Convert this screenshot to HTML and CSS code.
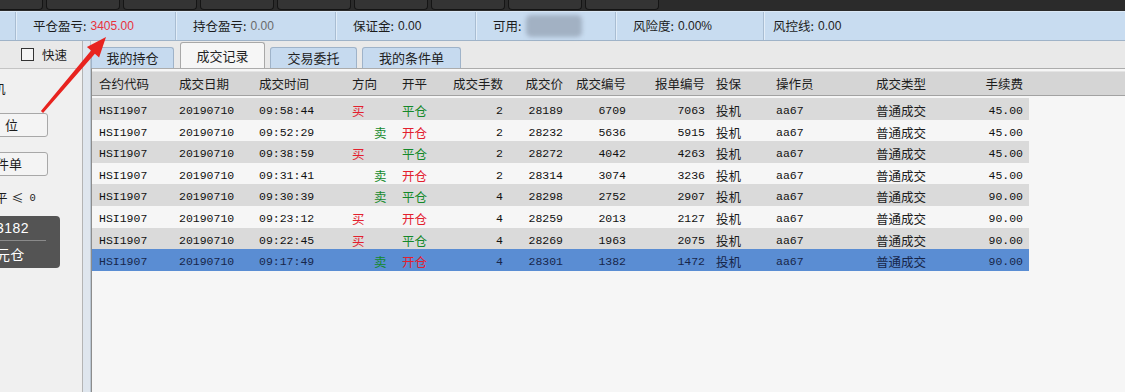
FILE: index.html
```html
<!DOCTYPE html>
<html lang="zh-CN">
<head>
    <meta charset="UTF-8">
    <meta name="viewport" content="width=device-width, initial-scale=1.0">
    <title>成交记录</title>
    <link rel="stylesheet" href="styles.css">
</head>
<body>
    <div class="top-bar">
        <div class="top-btn"></div>
        <div class="top-btn"></div>
        <div class="top-btn"></div>
        <div class="top-btn"></div>
        <div class="top-btn"></div>
        <div class="top-btn"></div>
        <div class="top-btn"></div>
        <div class="top-btn"></div>
        <div class="top-btn"></div>
    </div>

    <div class="account-bar">
        <div class="acc-lead"></div>
        <div class="acc-item w160">平仓盈亏: <span class="acc-loss">3405.00</span></div>
        <div class="acc-item w160">持仓盈亏: <span class="acc-dim">0.00</span></div>
        <div class="acc-item w140">保证金: <span class="acc-val">0.00</span></div>
        <div class="acc-item w140">可用: <span class="acc-hidden"></span></div>
        <div class="acc-item w148">风险度: <span class="acc-val">0.00%</span></div>
        <div class="acc-item acc-last">风控线: <span class="acc-val">0.00</span></div>
    </div>

    <div class="main">
        <div class="side">
            <div class="side-head">
                <span class="check"></span>快速
            </div>
            <div class="side-body">
                <div class="side-cut">机</div>
                <div class="side-btn">位</div>
                <div class="side-btn side-btn-2">件单</div>
                <div class="side-rule"><span class="rule-cut">平</span><span class="rule-le">≤</span><span class="rule-zero">0</span></div>
                <div class="close-box">
                    <div class="close-num">3182</div>
                    <div class="close-text">元 仓</div>
                </div>
            </div>
        </div>

        <div class="splitter"></div>

        <div class="records">
            <div class="tabs">
                <div class="tab t1">我的持仓</div>
                <div class="tab tab-active t2">成交记录</div>
                <div class="tab t3">交易委托</div>
                <div class="tab t4">我的条件单</div>
            </div>

            <div class="grid-box">
                <div class="grid-head">
                    <div class="cell c-first">合约代码</div>
                    <div class="cell">成交日期</div>
                    <div class="cell">成交时间</div>
                    <div class="cell c-tight">方向</div>
                    <div class="cell c-tight">开平</div>
                    <div class="cell num">成交手数</div>
                    <div class="cell num">成交价</div>
                    <div class="cell num">成交编号</div>
                    <div class="cell num">报单编号</div>
                    <div class="cell">投保</div>
                    <div class="cell">操作员</div>
                    <div class="cell">成交类型</div>
                    <div class="cell num">手续费</div>
                    <div></div>
                </div>

                <div class="grid-row odd">
                    <div class="cell c-first mono">HSI1907</div>
                    <div class="cell mono">20190710</div>
                    <div class="cell mono">09:58:44</div>
                    <div class="cell c-tight buy">买</div>
                    <div class="cell c-tight green">平仓</div>
                    <div class="cell num mono">2</div>
                    <div class="cell num mono">28189</div>
                    <div class="cell num mono">6709</div>
                    <div class="cell num mono">7063</div>
                    <div class="cell">投机</div>
                    <div class="cell mono">aa67</div>
                    <div class="cell">普通成交</div>
                    <div class="cell num mono">45.00</div>
                </div>
                <div class="grid-row">
                    <div class="cell c-first mono">HSI1907</div>
                    <div class="cell mono">20190710</div>
                    <div class="cell mono">09:52:29</div>
                    <div class="cell c-tight sell">卖</div>
                    <div class="cell c-tight red">开仓</div>
                    <div class="cell num mono">2</div>
                    <div class="cell num mono">28232</div>
                    <div class="cell num mono">5636</div>
                    <div class="cell num mono">5915</div>
                    <div class="cell">投机</div>
                    <div class="cell mono">aa67</div>
                    <div class="cell">普通成交</div>
                    <div class="cell num mono">45.00</div>
                </div>
                <div class="grid-row odd">
                    <div class="cell c-first mono">HSI1907</div>
                    <div class="cell mono">20190710</div>
                    <div class="cell mono">09:38:59</div>
                    <div class="cell c-tight buy">买</div>
                    <div class="cell c-tight green">平仓</div>
                    <div class="cell num mono">2</div>
                    <div class="cell num mono">28272</div>
                    <div class="cell num mono">4042</div>
                    <div class="cell num mono">4263</div>
                    <div class="cell">投机</div>
                    <div class="cell mono">aa67</div>
                    <div class="cell">普通成交</div>
                    <div class="cell num mono">45.00</div>
                </div>
                <div class="grid-row">
                    <div class="cell c-first mono">HSI1907</div>
                    <div class="cell mono">20190710</div>
                    <div class="cell mono">09:31:41</div>
                    <div class="cell c-tight sell">卖</div>
                    <div class="cell c-tight red">开仓</div>
                    <div class="cell num mono">2</div>
                    <div class="cell num mono">28314</div>
                    <div class="cell num mono">3074</div>
                    <div class="cell num mono">3236</div>
                    <div class="cell">投机</div>
                    <div class="cell mono">aa67</div>
                    <div class="cell">普通成交</div>
                    <div class="cell num mono">45.00</div>
                </div>
                <div class="grid-row odd">
                    <div class="cell c-first mono">HSI1907</div>
                    <div class="cell mono">20190710</div>
                    <div class="cell mono">09:30:39</div>
                    <div class="cell c-tight sell">卖</div>
                    <div class="cell c-tight green">平仓</div>
                    <div class="cell num mono">4</div>
                    <div class="cell num mono">28298</div>
                    <div class="cell num mono">2752</div>
                    <div class="cell num mono">2907</div>
                    <div class="cell">投机</div>
                    <div class="cell mono">aa67</div>
                    <div class="cell">普通成交</div>
                    <div class="cell num mono">90.00</div>
                </div>
                <div class="grid-row">
                    <div class="cell c-first mono">HSI1907</div>
                    <div class="cell mono">20190710</div>
                    <div class="cell mono">09:23:12</div>
                    <div class="cell c-tight buy">买</div>
                    <div class="cell c-tight red">开仓</div>
                    <div class="cell num mono">4</div>
                    <div class="cell num mono">28259</div>
                    <div class="cell num mono">2013</div>
                    <div class="cell num mono">2127</div>
                    <div class="cell">投机</div>
                    <div class="cell mono">aa67</div>
                    <div class="cell">普通成交</div>
                    <div class="cell num mono">90.00</div>
                </div>
                <div class="grid-row odd">
                    <div class="cell c-first mono">HSI1907</div>
                    <div class="cell mono">20190710</div>
                    <div class="cell mono">09:22:45</div>
                    <div class="cell c-tight buy">买</div>
                    <div class="cell c-tight green">平仓</div>
                    <div class="cell num mono">4</div>
                    <div class="cell num mono">28269</div>
                    <div class="cell num mono">1963</div>
                    <div class="cell num mono">2075</div>
                    <div class="cell">投机</div>
                    <div class="cell mono">aa67</div>
                    <div class="cell">普通成交</div>
                    <div class="cell num mono">90.00</div>
                </div>
                <div class="grid-row selected">
                    <div class="cell c-first mono">HSI1907</div>
                    <div class="cell mono">20190710</div>
                    <div class="cell mono">09:17:49</div>
                    <div class="cell c-tight sell">卖</div>
                    <div class="cell c-tight red">开仓</div>
                    <div class="cell num mono">4</div>
                    <div class="cell num mono">28301</div>
                    <div class="cell num mono">1382</div>
                    <div class="cell num mono">1472</div>
                    <div class="cell">投机</div>
                    <div class="cell mono">aa67</div>
                    <div class="cell">普通成交</div>
                    <div class="cell num mono">90.00</div>
                </div>
            </div>
        </div>
    </div>

    <!-- annotation arrow pointing at the closed P&L -->
    <svg class="pointer" width="130" height="130" viewBox="0 0 130 130">
        <polygon points="40.9,111 91.1,50.6 86.9,47 106,37 99.1,57.4 94.9,53.8 43.1,113" fill="#e8231f"/>
    </svg>
</body>
</html>
```

FILE: styles.css
```css
* {
    box-sizing: border-box;
}

body {
    margin: 0;
    width: 1125px;
    height: 392px;
    overflow: hidden;
    position: relative;
    background-color: #f0f0f0;
    color: #1c1c1c;
    font-family: "Noto Sans CJK SC", "Liberation Sans", sans-serif;
    font-size: 12.5px;
}

/* top toolbar */
.top-bar {
    height: 11px;
    background-color: #2b2b2b;
    display: flex;
    gap: 3px;
    margin-left: -31px;
}

.top-btn {
    width: 74px;
    height: 10px;
    background-color: #343434;
    border: 1px solid #151515;
    border-top: none;
    border-radius: 0 0 4px 4px;
}

/* account summary */
.account-bar {
    height: 30px;
    display: flex;
    align-items: stretch;
    background-color: #c8dcf0;
    border-top: 1px solid #dbe8f5;
    border-bottom: 1px solid #9fb3c8;
    font-size: 12.5px;
    line-height: 28px;
}

.acc-lead {
    width: 15px;
}

.acc-item {
    border-left: 1px solid #a9bdd2;
    box-shadow: inset 1px 0 0 #e2edf8;
    padding-left: 17px;
    white-space: nowrap;
    display: flex;
    align-items: center;
    gap: 4px;
}

.w160 { width: 160px; }
.w140 { width: 140px; }
.w148 { width: 148px; }

.acc-last {
    padding-left: 9px;
}

.acc-loss,
.acc-dim,
.acc-val {
    font-family: "Liberation Sans", sans-serif;
    font-size: 12px;
}

.acc-loss {
    color: #e8323c;
}

.acc-dim {
    color: #6a6a6a;
}

.acc-val {
    color: #222;
}

.acc-hidden {
    display: inline-block;
    width: 56px;
    height: 22px;
    margin-left: 1px;
    background-color: #a2b1c3;
    border-radius: 5px;
    filter: blur(2px);
}

/* main area */
.main {
    display: flex;
    height: 351px;
}

.side {
    width: 83px;
    border-right: 1px solid #b4b4b4;
    overflow: hidden;
    background-color: #f0f0f0;
}

.side-head {
    height: 28px;
    display: flex;
    align-items: center;
    padding-left: 21px;
    gap: 8px;
    background-color: #e9e9e9;
    border-bottom: 1px solid #c4c4c4;
    font-size: 12.5px;
}

.check {
    width: 13px;
    height: 13px;
    border: 1px solid #333;
    background-color: #f4f4f4;
}

.side-body {
    padding-top: 12px;
}

.side-cut {
    height: 16px;
    line-height: 16px;
    margin-left: -7px;
    font-size: 12.5px;
}

.side-btn {
    width: 60px;
    height: 24px;
    margin-left: -12px;
    margin-top: 16px;
    padding-left: 16px;
    line-height: 22px;
    border: 1px solid #a8a8a8;
    border-radius: 3px;
    background-color: #f4f4f4;
    font-size: 13px;
}

.side-btn-2 {
    margin-top: 15px;
    padding-left: 7px;
}

.side-rule {
    margin-top: 14px;
    height: 16px;
    line-height: 16px;
    margin-left: -5px;
    display: flex;
    align-items: center;
}

.rule-cut {
    font-size: 12.5px;
}

.rule-le {
    margin-left: 4px;
    font-size: 12px;
}

.rule-zero {
    margin-left: 6px;
    font-family: "Liberation Mono", monospace;
    font-size: 10.5px;
}

.close-box {
    width: 70px;
    height: 52px;
    margin-left: -10px;
    margin-top: 10px;
    background-color: #545454;
    border-radius: 4px;
    color: #fff;
}

.close-num {
    height: 25px;
    line-height: 25px;
    padding-left: 6px;
    font-family: "Liberation Sans", sans-serif;
    font-size: 14px;
    letter-spacing: 0.5px;
    margin-right: 14px;
    border-bottom: 1px solid #8a8a8a;
}

.close-text {
    height: 26px;
    line-height: 26px;
    padding-left: 6px;
    font-size: 14px;
    word-spacing: -3px;
}

.splitter {
    width: 8px;
    background-color: #dfe6ee;
    border-right: 1px solid #bac6d2;
}

.records {
    flex: 1;
    display: flex;
    flex-direction: column;
}

.tabs {
    height: 27px;
    display: flex;
    align-items: flex-end;
    background-color: #e9e9e9;
}

.tab {
    height: 21px;
    line-height: 20px;
    text-align: center;
    background-color: #c6daef;
    border: 1px solid #9fb3c9;
    border-bottom: none;
    border-radius: 3px 3px 0 0;
    font-size: 13px;
    color: #222;
}

.t1 { width: 83px; }
.t2 { width: 85px; margin-left: 6px; }
.t3 { width: 87px; margin-left: 5px; }
.t4 { width: 99px; margin-left: 5px; }

.tab-active {
    height: 26px;
    line-height: 26px;
    background-color: #f6f6f6;
    border-color: #a8a8a8;
}

.grid-box {
    flex: 1;
    background-color: #f6f6f6;
    border-top: 1px solid #acacac;
    border-left: 1px solid #8c8c8c;
    padding-top: 2px;
}

.grid-head,
.grid-row {
    display: grid;
    grid-template-columns: 82px 80px 95px 50px 45px 65px 60px 63px 79px 60px 100px 88px 70px;
    align-items: center;
}

.grid-head {
    grid-template-columns: 82px 80px 95px 50px 45px 65px 60px 63px 79px 60px 100px 88px 70px 1fr;
    height: 25px;
    margin-bottom: 2px;
    background-color: #d5d5d5;
    border-top: 1px solid #e4e4e4;
    border-bottom: 1px solid #a2a2a2;
    font-size: 12.5px;
}

.grid-row {
    width: 937px;
    height: 21.6px;
    font-size: 12.5px;
}

.grid-row.odd {
    background-color: #dadada;
}

.grid-row.selected {
    background-color: #5a8dd3;
    color: #17264a;
}

.cell {
    padding: 0 5px 0 5px;
    white-space: nowrap;
    line-height: 20px;
}

.grid-row .cell {
    padding-top: 3px;
}

.c-first {
    padding-left: 7px;
}

.c-tight {
    padding-left: 3px;
}

.num {
    text-align: right;
    padding-right: 6px;
}

.mono {
    font-family: "Liberation Mono", "Noto Sans CJK SC", monospace;
    font-size: 11.5px;
    color: #111;
}

.selected .mono {
    color: #17264a;
}

.buy {
    color: #e3202e;
}

.sell {
    color: #14892a;
    padding-left: 25px;
}

.green {
    color: #14892a;
}

.red {
    color: #e3202e;
}

.pointer {
    position: absolute;
    top: 0;
    left: 0;
    pointer-events: none;
}
```
